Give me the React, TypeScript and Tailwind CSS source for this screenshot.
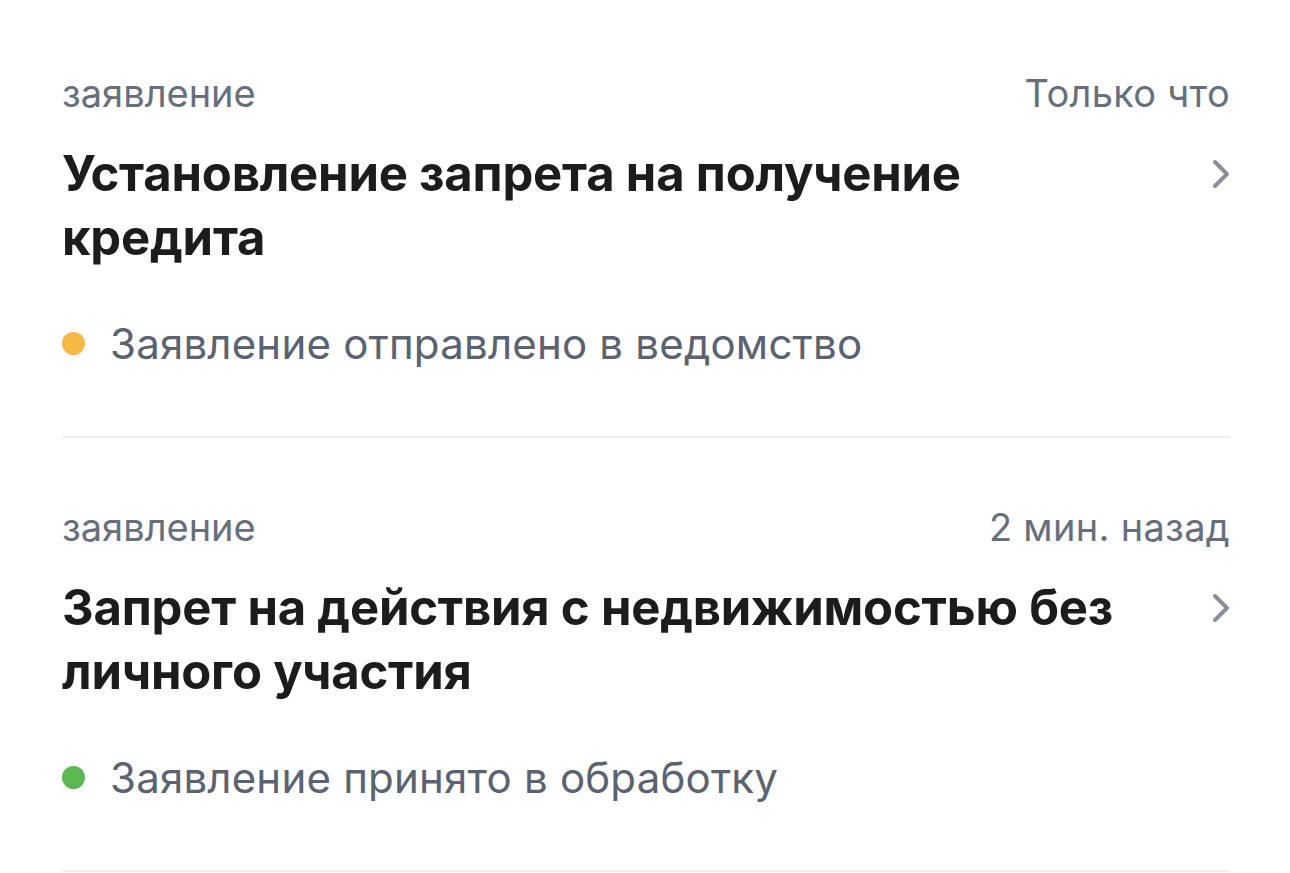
const items = [
  {
    kind: "заявление",
    time: "Только что",
    title: "Установление запрета на получение кредита",
    status: "Заявление отправлено в ведомство",
    dot: "bg-[#f5b945]",
  },
  {
    kind: "заявление",
    time: "2 мин. назад",
    title: "Запрет на действия с недвижимостью без личного участия",
    status: "Заявление принято в обработку",
    dot: "bg-[#5cb852]",
  },
];

function Chevron() {
  return (
    <svg width="18" height="30" viewBox="0 0 18 30" fill="none" className="shrink-0">
      <path d="M3 3 L15 15 L3 27" stroke="#8a8e97" strokeWidth="4" strokeLinecap="round" strokeLinejoin="round" />
    </svg>
  );
}

export default function App() {
  return (
    <div className="min-h-screen bg-white pt-[4px] font-['Inter',sans-serif]">
      <div className="pl-[62px] pr-[60px]">
        {items.map((it, i) => (
          <div key={i} className="border-b-2 border-[#eeeff1] pt-[66px] pb-[67px]">
            <div className="flex items-baseline justify-between text-[38px] leading-[46px] text-[#686f7c]">
              <span>{it.kind}</span>
              <span className="tracking-[0.3px]">{it.time}</span>
            </div>
            <div className="mt-[26px] flex items-start justify-between">
              <h2 className="max-w-[1080px] text-[49px] leading-[64px] font-bold text-[#1c1c1e] tracking-[-0.2px]">
                {it.title}
              </h2>
              <div className="mt-[17px]">
                <Chevron />
              </div>
            </div>
            <div className="mt-[49px] flex items-start">
              <span className={`mt-[13px] h-[23px] w-[23px] shrink-0 rounded-full ${it.dot}`} />
              <span className="ml-[25px] text-[42px] leading-[50px] text-[#5b6270] tracking-[0.2px]">{it.status}</span>
            </div>
          </div>
        ))}
      </div>
    </div>
  );
}
